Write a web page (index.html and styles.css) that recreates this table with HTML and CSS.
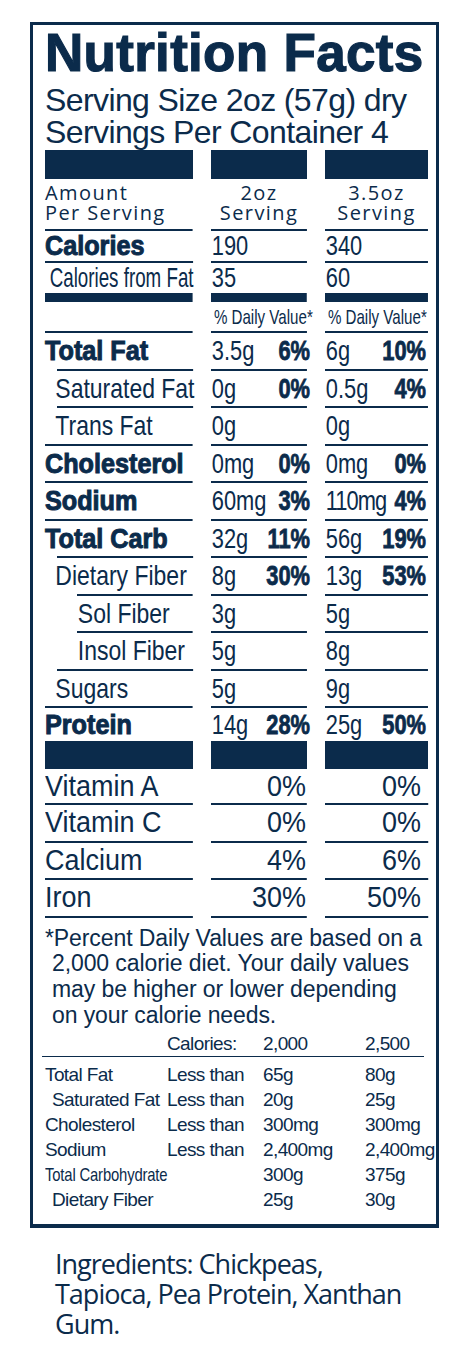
FILE: index.html
```html
<!DOCTYPE html>
<html lang="en">
<head>
  <meta charset="UTF-8" />
  <meta name="viewport" content="width=device-width, initial-scale=1" />
  <title>Nutrition Facts</title>
  <link rel="stylesheet" href="styles.css">
</head>
<body>

  <div class="label">
    <h1>Nutrition Facts</h1>
    <p class="serving">Serving Size 2oz (57g) dry<br>Servings Per Container 4</p>

    <div class="row bars">
      <div></div><div></div><div></div>
    </div>

    <div class="row head">
      <div>Amount<br>Per Serving</div>
      <div class="center">2oz<br>Serving</div>
      <div class="center">3.5oz<br>Serving</div>
    </div>

    <div class="row cal">
      <div class="name bold">Calories</div>
      <div class="val">190</div>
      <div class="val">340</div>
    </div>
    <div class="row cal">
      <div class="name fatcal">Calories from Fat</div>
      <div class="val">35</div>
      <div class="val">60</div>
    </div>

    <div class="row dv">
      <div></div>
      <div class="val">% Daily Value*</div>
      <div class="val">% Daily Value*</div>
    </div>

    <div class="row item">
      <div class="name bold">Total Fat</div>
      <div class="val"><span>3.5g</span><b>6%</b></div>
      <div class="val"><span>6g</span><b>10%</b></div>
    </div>
    <div class="row item">
      <div class="name sub">Saturated Fat</div>
      <div class="val"><span>0g</span><b>0%</b></div>
      <div class="val"><span>0.5g</span><b>4%</b></div>
    </div>
    <div class="row item">
      <div class="name sub">Trans Fat</div>
      <div class="val"><span>0g</span></div>
      <div class="val"><span>0g</span></div>
    </div>
    <div class="row item">
      <div class="name bold">Cholesterol</div>
      <div class="val"><span>0mg</span><b>0%</b></div>
      <div class="val"><span>0mg</span><b>0%</b></div>
    </div>
    <div class="row item">
      <div class="name bold">Sodium</div>
      <div class="val"><span>60mg</span><b>3%</b></div>
      <div class="val"><span class="tight">110mg</span><b>4%</b></div>
    </div>
    <div class="row item">
      <div class="name bold">Total Carb</div>
      <div class="val"><span>32g</span><b>11%</b></div>
      <div class="val"><span>56g</span><b>19%</b></div>
    </div>
    <div class="row item">
      <div class="name sub">Dietary Fiber</div>
      <div class="val"><span>8g</span><b>30%</b></div>
      <div class="val"><span>13g</span><b>53%</b></div>
    </div>
    <div class="row item">
      <div class="name sub2">Sol Fiber</div>
      <div class="val"><span>3g</span></div>
      <div class="val"><span>5g</span></div>
    </div>
    <div class="row item">
      <div class="name sub2">Insol Fiber</div>
      <div class="val"><span>5g</span></div>
      <div class="val"><span>8g</span></div>
    </div>
    <div class="row item">
      <div class="name sub">Sugars</div>
      <div class="val"><span>5g</span></div>
      <div class="val"><span>9g</span></div>
    </div>
    <div class="row item protein">
      <div class="name bold">Protein</div>
      <div class="val"><span>14g</span><b>28%</b></div>
      <div class="val"><span>25g</span><b>50%</b></div>
    </div>

    <div class="row bars thin">
      <div></div><div></div><div></div>
    </div>

    <div class="row vit first">
      <div>Vitamin A</div>
      <div class="pct">0%</div>
      <div class="pct">0%</div>
    </div>
    <div class="row vit">
      <div>Vitamin C</div>
      <div class="pct">0%</div>
      <div class="pct">0%</div>
    </div>
    <div class="row vit">
      <div>Calcium</div>
      <div class="pct">4%</div>
      <div class="pct">6%</div>
    </div>
    <div class="row vit">
      <div>Iron</div>
      <div class="pct">30%</div>
      <div class="pct">50%</div>
    </div>

    <p class="note">*Percent Daily Values are based on a<br>2,000 calorie diet. Your daily values<br>may be higher or lower depending<br>on your calorie needs.</p>

    <div class="limits">
      <div class="lim-row lim-head">
        <span></span><span>Calories:</span><span>2,000</span><span>2,500</span>
      </div>
      <div class="lim-row">
        <span>Total Fat</span><span>Less than</span><span>65g</span><span>80g</span>
      </div>
      <div class="lim-row">
        <span class="in">Saturated Fat</span><span>Less than</span><span>20g</span><span>25g</span>
      </div>
      <div class="lim-row">
        <span>Cholesterol</span><span>Less than</span><span>300mg</span><span>300mg</span>
      </div>
      <div class="lim-row">
        <span>Sodium</span><span>Less than</span><span>2,400mg</span><span>2,400mg</span>
      </div>
      <div class="lim-row">
        <span class="narrow">Total Carbohydrate</span><span></span><span>300g</span><span>375g</span>
      </div>
      <div class="lim-row">
        <span class="in">Dietary Fiber</span><span></span><span>25g</span><span>30g</span>
      </div>
    </div>
  </div>

  <p class="ingredients">Ingredients: Chickpeas,<br>Tapioca, Pea Protein, Xanthan<br>Gum.</p>

</body>
</html>
```

FILE: styles.css
```css
body {
  margin: 0;
  background: #fff;
  color: #0b2b4b;
  font-family: 'Liberation Sans', Arial, sans-serif;
}
.label {
  box-sizing: border-box;
  width: 409px;
  margin: 22px 0 0 30px;
  border: 3px solid #0b2b4b;
  border-bottom-width: 4px;
  padding: 1px 8px 12px 12px;
}
h1 {
  margin: 0;
  font-size: 53px;
  line-height: 53px;
  font-weight: bold;
  letter-spacing: 0.3px;
  -webkit-text-stroke: 1.2px #0b2b4b;
  white-space: nowrap;
}
.serving {
  margin: 5px 0 0;
  font-size: 32px;
  line-height: 32px;
  letter-spacing: -0.6px;
  white-space: nowrap;
}

/* main table: three columns */
.row {
  display: grid;
  grid-template-columns: 148px 96px 103px;
  column-gap: 18px;
  font-size: 28px;
  white-space: nowrap;
}
.bars {
  margin-top: 2px;
  height: 29px;
}
.bars div {
  background: #0b2b4b;
}
.bars.thin {
  margin-top: 0;
  height: 28px;
}
.head {
  box-sizing: border-box;
  height: 50px;
  padding-top: 4px;
  font-family: 'Open Sans', sans-serif;
  font-size: 20px;
  line-height: 20px;
  letter-spacing: 1.4px;
}
.head .center {
  text-align: center;
}

/* condensed type: cells are drawn wide, then squeezed back into their column */
.cal > div,
.dv > div,
.item > div,
.vit > div {
  --sx: 0.82;
  box-sizing: border-box;
  width: calc((100% - var(--ind, 0px)) / var(--sx));
  transform: scaleX(var(--sx));
  transform-origin: 0 0;
}
.cal > div {
  border-top: 2px solid #0b2b4b;
  line-height: 30px;
}
.bold {
  font-weight: bold;
  -webkit-text-stroke: 1px #0b2b4b;
}
.row > .bold {
  --sx: 0.9;
}
.row > .fatcal {
  --sx: 0.67;
  padding-left: 7px;
}
.row > .val {
  --sx: 0.78;
  padding-left: 1px;
}
.dv > div {
  border-top: 9px solid #0b2b4b;
  line-height: 29px;
  font-size: 21px;
}
.dv > .val {
  --sx: 0.72;
  padding-left: 4px;
}
.item {
  height: 37.5px;
}
.item > div {
  border-top: 2px solid #0b2b4b;
  line-height: 35.5px;
}
.item.protein {
  height: 35px;
}
.item.protein > div {
  line-height: 33px;
}
.item .val {
  display: flex;
  justify-content: space-between;
}
.item .val:nth-child(2) b {
  margin-right: -3.8px;
}
.item .val:nth-child(3) b {
  margin-right: 2.6px;
}
.item b {
  -webkit-text-stroke: 0.8px #0b2b4b;
}
.item .tight {
  letter-spacing: -1.2px;
}
.row > .sub {
  --ind: 12px;
  margin-left: 12px;
  text-indent: -2px;
}
.row > .sub2 {
  --ind: 32px;
  margin-left: 32px;
  text-indent: 1px;
}
.vit {
  height: 37.5px;
  font-size: 29px;
}
.vit.first {
  height: 36px;
}
.row.vit > div {
  --sx: 0.93;
  border-bottom: 2px solid #0b2b4b;
  line-height: 35.5px;
}
.vit.first > div {
  line-height: 34px;
}
.vit .pct {
  text-align: right;
  padding-right: 1px;
}
.vit .pct:nth-child(3) {
  padding-right: 7.5px;
}

/* footnote */
.note {
  margin: 8px 0 0;
  padding-left: 7px;
  text-indent: -7px;
  font-size: 23px;
  line-height: 25.7px;
  letter-spacing: -0.1px;
  white-space: nowrap;
}
.limits {
  margin-top: 4px;
  font-size: 19px;
  letter-spacing: -0.6px;
  white-space: nowrap;
}
.lim-row {
  display: grid;
  grid-template-columns: 122px 96px 102px 1fr;
  height: 25px;
  line-height: 25px;
}
.lim-head {
  height: 24px;
  line-height: 24px;
  margin: 0 4px 5px -3px;
  padding-left: 3px;
  border-bottom: 1.5px solid #0b2b4b;
}
.lim-row .in {
  padding-left: 7px;
}
.lim-row .narrow {
  display: inline-block;
  letter-spacing: -0.2px;
  transform: scaleX(0.78);
  transform-origin: 0 0;
}

.ingredients {
  margin: 21px 0 0 55px;
  font-family: 'Open Sans', sans-serif;
  font-size: 27px;
  line-height: 30px;
  letter-spacing: -1px;
  white-space: nowrap;
}
```
